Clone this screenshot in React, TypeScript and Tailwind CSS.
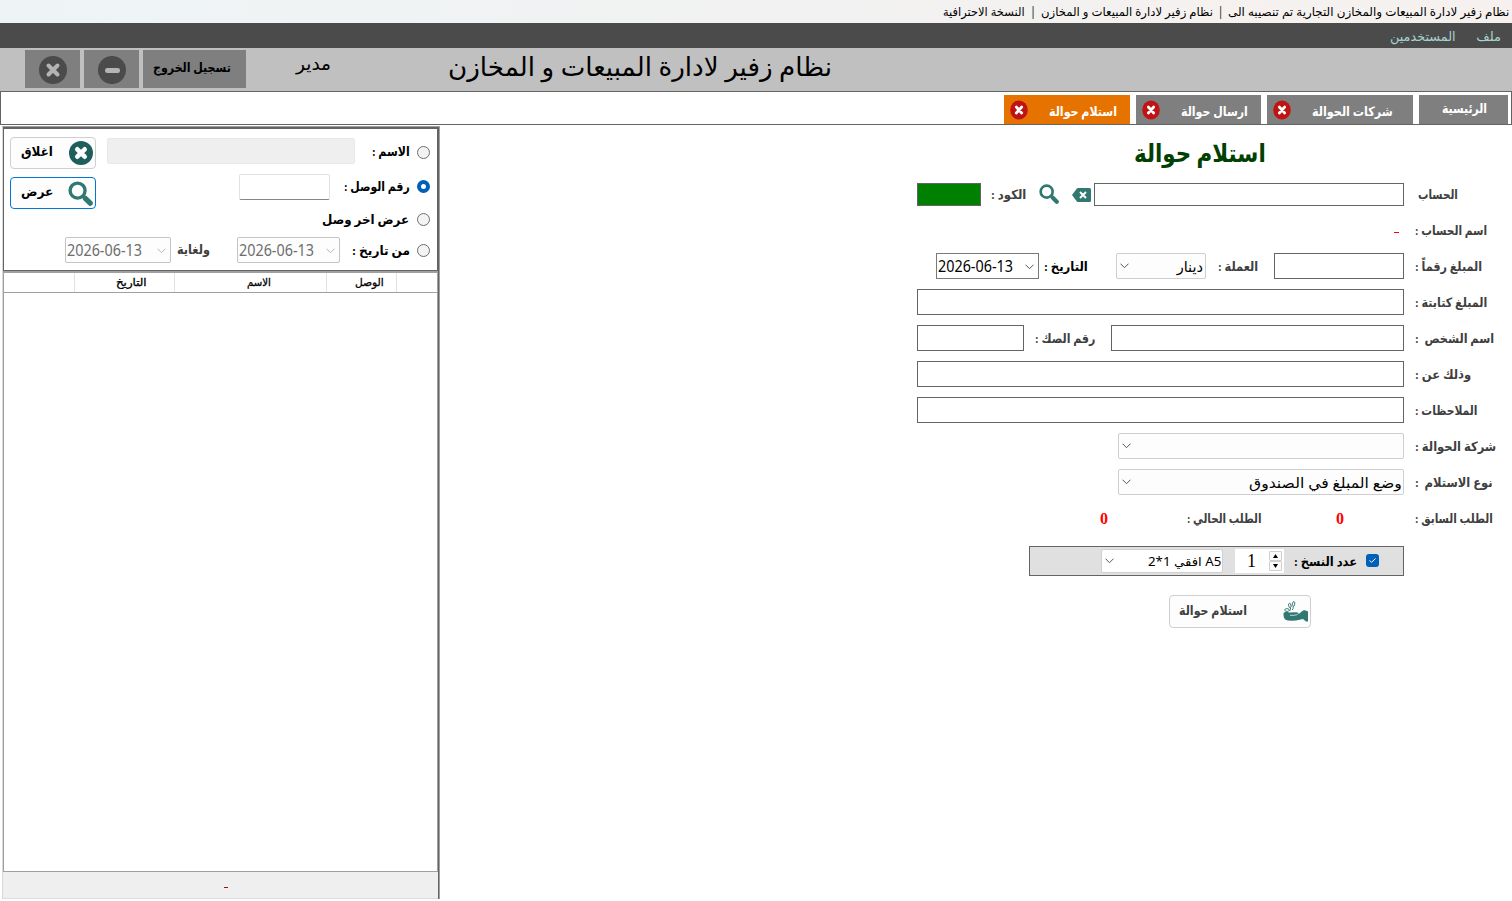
import { useLayoutEffect, useRef, useState } from "react";
import type { ReactNode } from "react";

const ARABIC = "font-['Liberation_Serif','DejaVu_Sans',sans-serif]";
const UI = "font-['Noto_Sans','DejaVu_Sans',sans-serif]";

/** Single line of text condensed or stretched to fill a fixed width. */
function Fit({ w, className = "", children, dir = "rtl" }: { w: number; className?: string; children: ReactNode; dir?: string }) {
  const ref = useRef<HTMLSpanElement>(null);
  const [k, setK] = useState(1);
  useLayoutEffect(() => {
    if (ref.current) setK(w / ref.current.offsetWidth);
  }, [w]);
  return (
    <span dir={dir} className={`block shrink-0 leading-none ${className}`} style={{ width: w }}>
      <span
        ref={ref}
        className="inline-block whitespace-pre"
        style={{ transform: `scaleX(${k})`, transformOrigin: dir === "rtl" ? "right" : "left" }}
      >
        {children}
      </span>
    </span>
  );
}

function Chevron({ className = "text-[#555]" }: { className?: string }) {
  return (
    <svg width="9" height="6" viewBox="0 0 9 6" className={`shrink-0 ${className}`} fill="none" stroke="currentColor">
      <path d="M.5 .7 4.5 4.7 8.5 .7" />
    </svg>
  );
}

function Magnifier({ size }: { size: number }) {
  return (
    <svg width={size} height={size} viewBox="0 0 24 24" className="shrink-0" fill="none" stroke="#317873">
      <circle cx="9.2" cy="9.2" r="7.2" strokeWidth="3.2" />
      <path d="M14 14 16.500 16.500" strokeWidth="3" />
      <path d="M16.600 16.600 21.300 21.300" strokeWidth="5" strokeLinecap="round" />
    </svg>
  );
}

function Tab({ w, tw, label, active, pad = "pr-[13px]" }: { w: number; tw: number; label: string; active?: boolean; pad?: string }) {
  return (
    <div className={`flex h-[29px] shrink-0 items-center justify-between pl-[6px] ${pad} ${active ? "bg-[#e67300]" : "bg-[#7f7f7f]"}`} style={{ width: w }}>
      <svg width="18" height="20" viewBox="0 0 18 20" preserveAspectRatio="none">
        <ellipse cx="9" cy="10" rx="8.800" ry="9.500" fill="#c01414" />
        <path d="M6.300 7 11.700 13 M11.700 7 6.300 13" stroke="#fff" strokeWidth="2.7" strokeLinecap="round" />
      </svg>
      <Fit w={tw} className="pt-[3px] text-[13px] font-bold text-white">{label}</Fit>
    </div>
  );
}

function Box({ w, className = "h-[26px]" }: { w: number; className?: string }) {
  return <div className={`shrink-0 border border-[#646464] bg-white ${className}`} style={{ width: w }} />;
}

function Label({ w, children, className = "" }: { w: number; children: ReactNode; className?: string }) {
  return <Fit w={w} className={`text-[13px] font-bold text-[#404040] ${className}`}>{children}</Fit>;
}

function Row({ children, className = "" }: { children: ReactNode; className?: string }) {
  return <div className={`flex h-9 items-center ${className}`}>{children}</div>;
}

function DateBox({ w, disabled }: { w: number; disabled?: boolean }) {
  return (
    <div
      className={`flex h-[26px] shrink-0 items-center justify-between border pl-px pr-1 ${disabled ? "rounded-[2px] border-[#c4c4c4] bg-[#fdfdfd] text-[#6d6d6d]" : "border-[#7a7a7a] bg-white text-black"}`}
      style={{ width: w }}
    >
      <Fit w={75} dir="ltr" className={`pt-px text-[15.5px] ${UI}`}>2026-06-13</Fit>
      <Chevron className={disabled ? "mt-[2px] text-[#b5b5b5]" : "mt-[2px] text-[#555]"} />
    </div>
  );
}

function Radio({ checked }: { checked?: boolean }) {
  return <span className={`block size-[13px] shrink-0 rounded-full ${checked ? "border-4 border-[#005fb8] bg-white" : "border border-[#6e6e6e] bg-[#f3f3f3]"}`} />;
}

function TitleBars() {
  return (
    <>
      <div className="flex h-[23px] items-center justify-end bg-linear-to-r from-[#eef4f6] via-[#f2f2f2] to-[#f6f1ee] pr-[3px]">
        <div className="flex" dir="rtl">
          <Fit w={281} className={`text-[12px] text-black ${UI}`}>نظام زفير لادارة المبيعات والمخازن التجارية تم تنصيبه الى</Fit>
          <Fit w={15} className={`text-[12px] text-black ${UI}`}>{"  |  "}</Fit>
          <Fit w={172} className={`text-[12px] text-black ${UI}`}>نظام زفير لادارة المبيعات و المخازن</Fit>
          <Fit w={16} className={`text-[12px] text-black ${UI}`}>{"  |  "}</Fit>
          <Fit w={82} className={`text-[12px] text-black ${UI}`}>النسخة الاحترافية</Fit>
        </div>
      </div>
      <div className="flex h-[25px] items-center justify-end gap-5 bg-[#4b4b4b] pr-[11px] pt-[2px] text-[#a6d3cb]">
        <Fit w={66} className="text-[13px]">المستخدمين</Fit>
        <Fit w={25} className="text-[13px]">ملف</Fit>
      </div>
      <div className="flex h-[43px] items-start bg-[#c0c0c0] pl-[25px] pt-[2px]">
        <div className="flex h-[38px] w-[55px] items-center justify-center bg-[#7f7f7f] pt-[2px] pl-px">
          <svg width="28" height="28" viewBox="0 0 28 28">
            <circle cx="14" cy="14" r="14" fill="#4b4b4b" />
            <path d="M9.5 9.5 18.5 18.5 M18.5 9.5 9.5 18.5" stroke="#b4b4b4" strokeWidth="4" strokeLinecap="round" />
          </svg>
        </div>
        <div className="ml-1 flex h-[38px] w-[55px] items-center justify-center bg-[#7f7f7f] pt-[2px] pl-px">
          <svg width="28" height="28" viewBox="0 0 28 28">
            <circle cx="14" cy="14" r="14" fill="#4b4b4b" />
            <rect x="7" y="12" width="15" height="5" rx="2.3" fill="#b4b4b4" />
          </svg>
        </div>
        <div className="ml-1 flex h-[38px] w-[103px] items-center bg-[#7f7f7f] pb-[3px] pl-[10px]">
          <Fit w={78} className="text-[13px] font-bold text-black">تسجيل الخروج</Fit>
        </div>
        <Fit w={35} className="ml-[50px] mt-[5px] text-[18px]">مدير</Fit>
        <Fit w={384} className="ml-[117px] mt-[5px] text-[26px]">نظام زفير لادارة المبيعات و المخازن</Fit>
      </div>
      <div className="flex h-[34px] items-end justify-end gap-[6px] border border-[#646464] bg-white pr-[3px]">
        <Tab w={126} tw={68} label="استلام حوالة" active />
        <Tab w={125} tw={67} label="ارسال حوالة" />
        <Tab w={146} tw={81} label="شركات الحوالة" pad="pr-[20px]" />
        <div className="flex h-[29px] w-[89px] items-center bg-[#7f7f7f] pl-[23px]">
          <Fit w={45} className="pb-[2px] text-[13px] font-bold text-white">الرئيسية</Fit>
        </div>
      </div>
    </>
  );
}

function SearchPanel() {
  return (
    <section className="ml-[2px] mt-px flex h-[773px] w-[438px] shrink-0 flex-col border-r border-t border-l border-[#a0a0a0] border-l-[#d8d8d8]">
      <div className="flex min-h-0 flex-1 flex-col border-r border-[#646464]">
        <div className="flex h-[144px] shrink-0 border border-t-2 border-[#646464] bg-white">
          <div className="flex w-[92px] shrink-0 flex-col gap-2 pl-[6px] pt-[8px]">
            <div className="flex h-8 w-[86px] items-center justify-between rounded border border-[#cfcfcf] bg-[#fdfdfd] pl-[10px] pr-[2px]">
              <Fit w={32} className="pb-[3px] text-[13px] font-bold text-black">اغلاق</Fit>
              <svg width="24" height="24" viewBox="0 0 24 24">
                <circle cx="12" cy="12" r="12" fill="#1f5f5b" />
                <path d="M8.300 8.300 15.700 15.700 M15.700 8.300 8.300 15.700" stroke="#fff" strokeWidth="4.6" strokeLinecap="round" />
              </svg>
            </div>
            <div className="flex h-8 w-[86px] items-center justify-between rounded border border-[#0078d4] bg-[#fdfdfd] pl-[10px] pr-[2px]">
              <Fit w={32} className="pb-[4px] text-[13px] font-bold text-black">عرض</Fit>
              <Magnifier size={25} />
            </div>
          </div>
          <div className="flex min-w-0 flex-1 flex-col pr-[7px] pt-[9px] text-black">
            <div className="flex h-[29px] items-start justify-end">
              <div className="h-[26px] w-[248px] rounded-[2px] border border-[#e8e8e8] bg-[#efefef]" />
              <Fit w={38} className="ml-[17px] mt-[7px] text-[13px] font-bold">الاسم :</Fit>
              <span className="ml-[7px] mt-[8px]"><Radio /></span>
            </div>
            <div className="mt-[7px] flex h-[26px] items-center justify-end">
              <div className="h-[26px] w-[91px] rounded-[2px] border border-[#e2e2e2] border-b-[#868686] bg-white" />
              <Fit w={66} className="ml-[14px] pb-[2px] text-[13px] font-bold">رقم الوصل :</Fit>
              <span className="mb-px ml-[7px]"><Radio checked /></span>
            </div>
            <div className="mt-[8px] flex h-[22px] items-center justify-end">
              <Fit w={87} className="text-[13px] font-bold">عرض اخر وصل</Fit>
              <span className="ml-2"><Radio /></span>
            </div>
            <div className="mt-[7px] flex h-[26px] items-center justify-end">
              <DateBox w={106} disabled />
              <Fit w={33} className="ml-[6px] pb-[2px] text-[13px] font-bold text-[#404040]">ولغاية</Fit>
              <span className="ml-[27px]"><DateBox w={103} disabled /></span>
              <Fit w={58} className="ml-[12px] text-[13px] font-bold">من تاريخ :</Fit>
              <span className="ml-[7px]"><Radio /></span>
            </div>
          </div>
        </div>
        <div className="flex min-h-0 flex-1 flex-col border border-t-2 border-[#a0a0a0] bg-white">
          <div className="flex h-[20px] shrink-0 border-b border-[#a0a0a0] text-[11px] text-black">
            <div className="w-[71px] border-r border-[#e2e2e2]" />
            <div className="flex w-[100px] items-center border-r border-[#e2e2e2] pb-px pl-[41px]"><Fit w={31} className="[-webkit-text-stroke:.3px_black]">التاريخ</Fit></div>
            <div className="flex w-[152px] items-center border-r border-[#e2e2e2] pb-px pl-[72px]"><Fit w={24} className="[-webkit-text-stroke:.3px_black]">الاسم</Fit></div>
            <div className="flex w-[70px] items-center border-r border-[#e2e2e2] pb-px pl-[28px]"><Fit w={29} className="[-webkit-text-stroke:.3px_black]">الوصل</Fit></div>
          </div>
        </div>
        <div className="flex h-[27px] shrink-0 items-center border-b border-[#dcdcdc] bg-[#efefef] pl-[221px] pt-[4px]">
          <span className="h-px w-1 bg-[#a01010]" />
        </div>
      </div>
    </section>
  );
}

function TransferForm() {
  return (
    <main className="w-[595px] shrink-0 pt-[12px]">
      <div className="flex h-[39px] items-start pl-[217px] pt-[4px]">
        <Fit w={132} className="text-[25px] font-bold text-[#004000]">استلام حوالة</Fit>
      </div>
      <Row>
        <Box w={64} className="mt-px h-[23px] !bg-[#008000]" />
        <Label w={35} className="ml-[10px]">الكود :</Label>
        <span className="ml-[13px]"><Magnifier size={20} /></span>
        <svg width="19" height="14" viewBox="0 0 19 14" className="ml-[13px] mt-px shrink-0">
          <path d="M6 0H17.5Q19 0 19 1.5V12.5Q19 14 17.5 14H6Q5.400 14 4.900 13.400L0 7 4.900 .6Q5.400 0 6 0Z" fill="#317873" />
          <path d="M8 4 14 10 M14 4 8 10" stroke="#fff" strokeWidth="2" />
        </svg>
        <span className="ml-[3px] mt-px"><Box w={310} className="h-[23px]" /></span>
        <Label w={40} className="ml-[14px]">الحساب</Label>
      </Row>
      <Row className="pl-[477px]">
        <span className="mt-[4px] h-px w-[5px] bg-[#ff0000]" />
        <Label w={72} className="ml-[16px]">اسم الحساب :</Label>
      </Row>
      <Row className="pl-[19px]">
        <DateBox w={103} />
        <Fit w={44} className="ml-[5px] text-[13px] font-bold text-black">التاريخ :</Fit>
        <div className="ml-[28px] flex h-[26px] w-[90px] items-center justify-between rounded-[2px] border border-[#cfcfcf] bg-[#fdfdfd] pl-[3px] pr-[2px]">
          <Chevron />
          <Fit w={26} className="pt-[3px] text-[14.5px]">دينار</Fit>
        </div>
        <Label w={40} className="ml-[12px]">العملة :</Label>
        <span className="ml-[16px]"><Box w={130} /></span>
        <Label w={67} className="ml-[11px]">المبلغ رقماً :</Label>
      </Row>
      <Row>
        <Box w={487} />
        <Label w={72} className="ml-[11px]">المبلغ كتابتة :</Label>
      </Row>
      <Row>
        <Box w={107} />
        <Label w={60} className="ml-[11px]">رقم الصك :</Label>
        <span className="ml-[16px]"><Box w={293} /></span>
        <Label w={79} className="ml-[11px]">{"اسم الشخص  :"}</Label>
      </Row>
      <Row>
        <Box w={487} />
        <Label w={56} className="ml-[11px]">وذلك عن :</Label>
      </Row>
      <Row>
        <Box w={487} />
        <Label w={62} className="ml-[11px]">الملاحظات :</Label>
      </Row>
      <Row className="pl-[201px]">
        <div className="flex h-[26px] w-[286px] items-center rounded-[2px] border border-[#cfcfcf] bg-[#fdfdfd] pl-[3px]"><Chevron /></div>
        <Label w={81} className="ml-[11px]">شركة الحوالة :</Label>
      </Row>
      <Row className="pl-[201px]">
        <div className="flex h-[26px] w-[286px] items-center justify-between rounded-[2px] border border-[#cfcfcf] bg-[#fdfdfd] pl-[3px] pr-px">
          <Chevron />
          <Fit w={153} className="pt-[3px] text-[14.5px] text-black">وضع المبلغ في الصندوق</Fit>
        </div>
        <Label w={78} className="ml-[11px]">{"نوع الاستلام  :"}</Label>
      </Row>
      <Row className="pl-[183px]">
        <span className="w-2 pt-[2px] text-[16px] font-bold text-[#ff0000]">0</span>
        <Label w={75} className="ml-[79px]">الطلب الحالي :</Label>
        <span className="ml-[74px] w-2 pt-[2px] text-[16px] font-bold text-[#ff0000]">0</span>
        <Label w={78} className="ml-[71px]">الطلب السابق :</Label>
      </Row>
      <div className="ml-[112px] mt-[10px] flex h-[30px] w-[375px] items-center border border-[#646464] bg-[#e0e0e0] pl-[71px]">
        <div className="flex h-[24px] w-[122px] items-center justify-between rounded-[2px] border border-[#cfcfcf] bg-white pl-[3px] pr-px">
          <Chevron />
          <Fit w={73} className={`pt-[2px] text-[12px] text-black ${UI}`}>A5 افقي 1*2</Fit>
        </div>
        <div className="ml-[12px] flex h-[24px] w-[49px] items-center justify-between bg-white pl-[12px] pr-[2px]">
          <span className="text-[18px] leading-none text-black">1</span>
          <div className="flex w-[13px] flex-col">
            <span className="flex h-[10px] items-center justify-center rounded-[1px] border border-[#cfcfcf] bg-[#fafafa]">
              <svg width="7" height="4" viewBox="0 0 5 4"><path d="M0 4 2.500 0 5 4Z" /></svg>
            </span>
            <span className="flex h-[10px] items-center justify-center rounded-[1px] border border-[#cfcfcf] bg-[#fafafa]">
              <svg width="7" height="4" viewBox="0 0 5 4"><path d="M0 0 2.500 4 5 0Z" /></svg>
            </span>
          </div>
        </div>
        <Fit w={63} className="ml-[10px] text-[13px] font-bold text-black">عدد النسخ :</Fit>
        <span className="mb-px ml-[9px] flex size-[13px] items-center justify-center rounded-[3px] bg-[#005fb8]">
          <svg width="7" height="5" viewBox="0 0 7 5" fill="none" stroke="#fff"><path d="M.5 2.300 2.500 4.300 6.500 .5" /></svg>
        </span>
      </div>
      <div className="ml-[252px] mt-[19px] flex h-[33px] w-[142px] items-center justify-between rounded border border-[#cfcfcf] bg-[#fdfdfd] pl-[9px] pr-[2px]">
        <Fit w={68} className="pb-[2px] text-[13px] font-bold text-[#404040]">استلام حوالة</Fit>
        <svg width="25" height="21" viewBox="0 0 25 21" fill="#317873">
          <path d="M.5 12Q3 10 6 11.500L13 11.300Q16 11.500 15.500 13.300L20 9.500Q21.500 8.700 25 10.500V20.500H23L20 18 13 19.500Q5 20 3 19 .3 17.500 .5 12Z" />
          <path d="M7 14.300Q11 14.800 14.500 13.500" fill="none" stroke="#fff" strokeWidth=".7" />
          <g fill="none" stroke="#317873" strokeWidth=".9">
            <ellipse cx="6.800" cy="4.500" rx="1.200" ry="2.300" transform="rotate(-12 6.800 4.500)" />
            <ellipse cx="10.500" cy="3" rx="1.200" ry="2.500" transform="rotate(12 10.500 3)" />
            <ellipse cx="4" cy="9" rx="2.300" ry="1.400" />
            <path d="M6.500 10Q8 9 7.500 6.800 M9 9Q10.500 8.500 10.200 5.800" />
          </g>
        </svg>
      </div>
    </main>
  );
}

export default function App() {
  return (
    <div className={`flex h-[901px] w-[1512px] flex-col overflow-hidden bg-white ${ARABIC}`}>
      <TitleBars />
      <div className="flex min-h-0 flex-1 items-start justify-between">
        <SearchPanel />
        <TransferForm />
      </div>
    </div>
  );
}
